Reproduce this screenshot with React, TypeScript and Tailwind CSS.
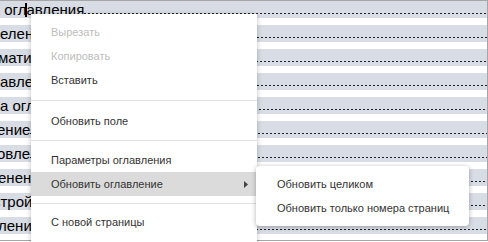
import { Fragment } from 'react';

const rows = [
  { text: ' огл', rest: 'авления', cursor: true, ml: 0 },
  { text: 'елен', ml: 0 },
  { text: 'мати', ml: -2 },
  { text: 'авлен', ml: 0 },
  { text: 'а огл', ml: 0 },
  { text: 'ение', ml: -3 },
  { text: 'овле', ml: -3 },
  { text: 'енен', ml: -2 },
  { text: 'стройк', ml: -7 },
  { text: 'лени', ml: -2 },
];

const Dots = () => (
  <div className="flex-1 self-end mb-[4px] h-px bg-[repeating-linear-gradient(90deg,#222_0_2px,transparent_2px_4px)]" />
);

const App = () => {
  return (
    <div className="w-[488px] h-[242px] bg-white overflow-hidden relative font-['Liberation_Sans',Arial,sans-serif]">
      <div className="w-[488px] h-[241px] border-t border-r border-b border-[#a6a6a6] overflow-hidden">
        {/* document rows */}
        <div className="flex flex-col">
          {rows.map((r, i) => (
            <div key={i} className="h-[24px] shrink-0">
              <div className="h-[17px] bg-[#d8dce4] flex items-stretch overflow-hidden">
                <span
                  className="text-[15px] leading-[17px] text-black whitespace-pre shrink-0"
                  style={{ marginLeft: r.ml }}
                >
                  {r.text}
                  {r.cursor && (
                    <Fragment>
                      <span className="inline-block w-[2px] h-[14px] bg-black align-[-2px] -mx-[1px]" />
                      {r.rest}
                    </Fragment>
                  )}
                </span>
                <Dots />
              </div>
            </div>
          ))}
        </div>
      </div>

      {/* context menu */}
      <div className="absolute left-[31px] top-[14px] w-[226px] h-[240px] bg-white shadow-[0_1px_5px_rgba(0,0,0,0.25)] pt-[6px] text-[11px] text-[#333]">
        <div className="h-[24px] flex items-center pl-[20px] text-[#bdbdbd]">Вырезать</div>
        <div className="h-[24px] flex items-center pl-[20px] text-[#bdbdbd]">Копировать</div>
        <div className="h-[24px] flex items-center pl-[20px]">Вставить</div>
        <div className="pt-[8px] pb-[8px]"><div className="h-px bg-[#e3e3e3]" /></div>
        <div className="h-[24px] flex items-center pl-[20px]">Обновить поле</div>
        <div className="pt-[7px] pb-[7px]"><div className="h-px bg-[#e3e3e3]" /></div>
        <div className="h-[24px] flex items-center pl-[20px]">Параметры оглавления</div>
        <div className="h-[24px] flex items-center pl-[20px] pr-[9px] bg-[#dbdbdb] justify-between">
          <span>Обновить оглавление</span>
          <svg width="4" height="7" viewBox="0 0 4 7">
            <path d="M0 0 L4 3.5 L0 7 Z" fill="#444" />
          </svg>
        </div>
        <div className="pt-[7px] pb-[6px]"><div className="h-px bg-[#e3e3e3]" /></div>
        <div className="h-[24px] flex items-center pl-[20px]">С новой страницы</div>
      </div>

      {/* submenu */}
      <div className="absolute left-[256px] top-[166px] w-[213px] rounded-[4px] bg-white shadow-[0_1px_5px_rgba(0,0,0,0.3)] py-[6px] text-[11px] text-[#333]">
        <div className="h-[24px] flex items-center pl-[21px]">Обновить целиком</div>
        <div className="h-[24px] flex items-center pl-[21px]">Обновить только номера страниц</div>
      </div>
    </div>
  );
};

export default App;
